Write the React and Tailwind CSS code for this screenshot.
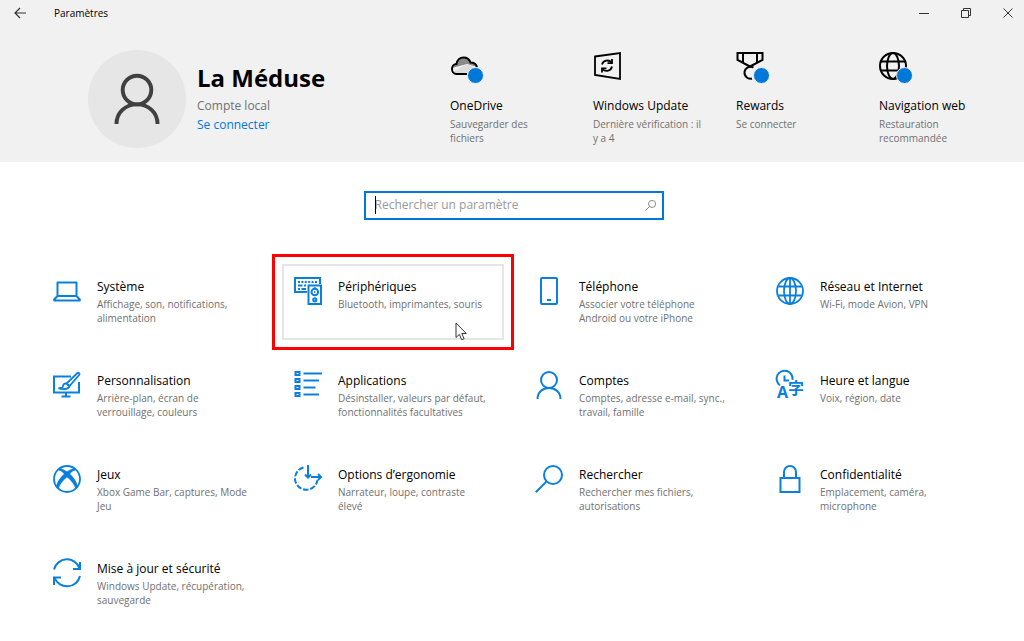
import React from 'react';

const Svg = ({ children, className = '', size = 28, stroke = 2 }) => (
  <svg
    width={size}
    height={size}
    viewBox="0 0 28 28"
    fill="none"
    stroke="currentColor"
    strokeWidth={stroke}
    className={`shrink-0 overflow-visible ${className}`}
    aria-hidden="true"
  >
    {children}
  </svg>
);

const LaptopIcon = () => (
  <Svg>
    <path d="M4.5 5.5h19V19h-19zM4.5 19 1.2 22.5v1h25.600v-1L23.5 19" strokeLinejoin="round" />
  </Svg>
);

const DevicesIcon = () => (
  <Svg>
    <path d="M13 15H1V1h25v6" />
    <path d="M4 5h20" strokeDasharray="2 1.4" />
    <path d="M4 8.5h4.500M10 8.5h2M4 12h2M7.5 12H12" />
    <path d="M14.500 8.500H27V27H14.500z" />
    <circle cx="20.800" cy="15" r="3.300" />
    <path d="M19.800 11h2M20 15h1.600" strokeWidth="1.400" />
    <circle cx="20.800" cy="22.800" r="1.600" />
  </Svg>
);

const PhoneIcon = () => (
  <Svg>
    <rect x="6" y="1" width="16" height="26" rx="1" />
    <path d="M12 23h4" />
  </Svg>
);

const GlobeIcon = () => (
  <Svg stroke={1.8}>
    <circle cx="14" cy="14" r="13" />
    <ellipse cx="14" cy="14" rx="6" ry="13" />
    <path d="M14 1v26M2.5 9.5h23M2.5 18.5h23" />
  </Svg>
);

const WebIcon = () => (
  <Svg>
    <circle cx="14" cy="14" r="13" />
    <ellipse cx="14" cy="14" rx="6" ry="13" />
    <path d="M2 9.5h24M2 18.5h24" />
  </Svg>
);

const PersonalizeIcon = () => (
  <Svg>
    <path d="M18 5.5H1v16h25V11M13 21v4.5M8.5 25.5h9" />
    <path d="M24.5 2c1-.8 2.6.6 1.8 1.8L16.5 15l-3-2.5z" strokeWidth="1.8" />
    <path d="M13.5 12.5c-2-.2-3.3 1-3.5 2.7-.1 1.2-1 1.8-4.5 1.9 3.5 1.7 10.5 1.4 11-2.1z" strokeWidth="1.8" />
  </Svg>
);

const AppsIcon = () => (
  <Svg>
    <path d="M1.5 1h4v3h-4zM1.5 8h4v3h-4zM1.5 15h4v3h-4zM1.5 22h4v3h-4z" />
    <path d="M9.5 2.5H28M9.5 9.5H25M9.5 16.5h12M9.5 23.5H25" />
  </Svg>
);

const PersonIcon = ({ size, className, stroke }) => (
  <Svg size={size} className={className} stroke={stroke}>
    <circle cx="14" cy="9" r="8" />
    <path d="M2.5 28c0-6.5 5-11 11.5-11s11.5 4.500 11.5 11" />
  </Svg>
);

const TimeLanguageIcon = () => (
  <Svg>
    <path d="M4 14.200A8 8 0 1 1 16.500 8.800" />
    <path d="M8.5 4.500V9.500h4.500" />
    <text x="1" y="27" fontSize="16" fontWeight="700" fill="currentColor" stroke="none" fontFamily="Open Sans, sans-serif">A</text>
    <text x="12" y="23" fontSize="16" fontWeight="700" fill="currentColor" stroke="none" fontFamily="Noto Sans CJK JP, sans-serif">字</text>
  </Svg>
);

const XboxIcon = () => (
  <Svg>
    <circle cx="14" cy="14" r="13" strokeWidth="1.8" />
    <path
      d="M5.5 3.5C8.5 3 11.5 4.700 14 6.500c2.500-1.800 5.500-3.500 8.500-3l-.5 2c-2 .3-3.800 2-5 3.500 4.500 4 8 9.500 7.700 13.500l-2.200 1.700C21.500 19.500 18 15.500 14 12.200c-4 3.300-7.500 7.300-8.500 12l-2.200-1.700C3 18.500 6.500 13 11 9 9.800 7.500 8 5.800 6 5.500z"
      fill="currentColor"
      stroke="none"
    />
  </Svg>
);

const EaseIcon = () => (
  <Svg>
    <path d="M9.500 2.500A11.300 11.300 0 1 0 23.500 15" strokeDasharray="5.500 1.800" />
    <path d="M14 0v12M11 9.500l3 3 3-3" />
    <path d="M17 12h10M24 9l3 3-3 3" />
  </Svg>
);

const SearchIcon = ({ size, className, stroke }) => (
  <Svg size={size} className={className} stroke={stroke}>
    <circle cx="18" cy="10" r="9" />
    <path d="M11.6 16.4.8 27.2" />
  </Svg>
);

const LockIcon = () => (
  <Svg>
    <path d="M4.5 13h19v14h-19zM8 13V7a6 6 0 0 1 12 0v6" />
  </Svg>
);

const SyncIcon = () => (
  <Svg>
    <path d="M1 10.5A13.3 13.3 0 0 1 26.5 9.3M27 17A13.3 13.3 0 0 1 1.500 18.500" />
    <path d="M27 3v7h-7M1 26v-7.500h7" />
  </Svg>
);

const CloudIcon = () => (
  <Svg>
    <path d="M2 16c0-3 2.5-4.5 4-4.5C7 7 10 5 13.5 5c4 0 6.500 2 7.500 5 4 0 6 2.500 6.300 5L17 12z" fill="#8a8a8a" stroke="none" />
    <path d="m3 20 14-8 10 5-5 5H6z" fill="#dcdcdc" stroke="none" />
    <path d="M17 22H6.500C3.500 22 2 19.500 2 17c0-3 2-5 4.500-5C7 8 10 5.500 13.500 5.500c3.500 0 6 2 7 5 3.500 0 6 2 6.500 5" />
  </Svg>
);

const UpdateIcon = () => (
  <Svg stroke={1.8}>
    <path d="M2 4.5 27 1v26L2 23z" />
    <path d="M9 12.5a5.5 5.5 0 0 1 9.500-2M19 14.500a5.500 5.500 0 0 1-9.500 2.500" />
    <path d="M19 7v4.200h-4.500M9 20.500v-4.200h4.500" />
  </Svg>
);

const RewardsIcon = () => (
  <Svg>
    <path d="M1.5 1h25v7L14 14.5 1.5 8zM7 1v10M21 1v10" />
    <path d="M17.5 15.5a6 6 0 1 0-1.500 11" />
  </Svg>
);

const quickLinks = [
  { title: 'OneDrive', text: 'Sauvegarder des fichiers', Icon: CloudIcon, badge: true },
  { title: 'Windows Update', text: 'Dernière vérification\u00a0:\u00a0il y a 4', Icon: UpdateIcon },
  { title: 'Rewards', text: 'Se connecter', Icon: RewardsIcon, badge: true },
  { title: 'Navigation web', text: 'Restauration recommandée', Icon: WebIcon, badge: true },
];

const categories = [
  { title: 'Système', text: 'Affichage, son, notifications, alimentation', Icon: LaptopIcon },
  { title: 'Périphériques', text: 'Bluetooth, imprimantes, souris', Icon: DevicesIcon, active: true },
  { title: 'Téléphone', text: 'Associer votre téléphone Android ou votre iPhone', Icon: PhoneIcon },
  { title: 'Réseau et Internet', text: 'Wi-Fi, mode Avion, VPN', Icon: GlobeIcon },
  { title: 'Personnalisation', text: 'Arrière-plan, écran de verrouillage, couleurs', Icon: PersonalizeIcon },
  { title: 'Applications', text: 'Désinstaller, valeurs par défaut, fonctionnalités facultatives', Icon: AppsIcon },
  { title: 'Comptes', text: 'Comptes, adresse e-mail, sync., travail, famille', Icon: PersonIcon },
  { title: 'Heure et langue', text: 'Voix, région, date', Icon: TimeLanguageIcon },
  { title: 'Jeux', text: 'Xbox Game Bar, captures, Mode Jeu', Icon: XboxIcon },
  { title: 'Options d’ergonomie', text: 'Narrateur, loupe, contraste élevé', Icon: EaseIcon },
  { title: 'Rechercher', text: 'Rechercher mes fichiers, autorisations', Icon: SearchIcon },
  { title: 'Confidentialité', text: 'Emplacement, caméra, microphone', Icon: LockIcon },
  { title: 'Mise à jour et sécurité', text: 'Windows Update, récupération, sauvegarde', Icon: SyncIcon },
];

const TitleBar = () => (
  <div className="flex h-[26px] items-center">
    <button type="button" aria-label="Retour" className="flex h-full w-10 items-center justify-center">
      <svg width="12" height="12" viewBox="0 0 12 12" fill="none" stroke="#333" strokeWidth="1.2">
        <path d="M6 1 1 6l5 5M1 6h11" />
      </svg>
    </button>
    <h1 className="ml-[14px] text-[10px] text-black">Paramètres</h1>
    <div className="ml-auto flex h-full gap-[10px] text-[#333]">
      <button type="button" aria-label="Réduire" className="flex w-8 items-center justify-center">
        <svg width="10" height="10" viewBox="0 0 10 10" stroke="currentColor"><path d="M0 5.5h10" /></svg>
      </button>
      <button type="button" aria-label="Restaurer" className="flex w-8 items-center justify-center">
        <svg width="10" height="10" viewBox="0 0 10 10" fill="none" stroke="currentColor">
          <path d="M.5 2.5h7v7h-7zM2.5 2.5v-2h7v7h-2" />
        </svg>
      </button>
      <button type="button" aria-label="Fermer" className="flex w-8 items-center justify-center">
        <svg width="10" height="10" viewBox="0 0 10 10" stroke="currentColor"><path d="m.5.5 9 9M9.5.5l-9 9" /></svg>
      </button>
    </div>
  </div>
);

const QuickLink = ({ item }) => {
  const { Icon } = item;
  return (
    <a href="#" className="block w-[143px] pr-8">
      <span className="relative block h-7 w-7 text-black">
        <Icon />
        {item.badge && (
          <span className="absolute -right-[6px] -bottom-1 h-[17px] w-[17px] rounded-full border border-[#f1f1f1] bg-[#0078d7]" />
        )}
      </span>
      <span className="mt-[18px] block text-[12px] leading-4 whitespace-nowrap text-black">{item.title}</span>
      <span className="mt-[3px] block text-[10px] leading-[14px] text-[#707070]">{item.text}</span>
    </a>
  );
};

const CategoryTile = ({ item }) => {
  const { Icon } = item;
  return (
    <a
      href="#"
      className={`relative flex h-[76px] gap-4 border-2 px-[10px] pt-[11px] ${
        item.active ? 'border-[#e6e6e6]' : 'border-transparent'
      }`}
    >
      <span className="text-[#0a80dc]">
        <Icon />
      </span>
      <span className="min-w-0">
        <span className="block text-[12px] leading-5 whitespace-nowrap text-black">{item.title}</span>
        <span className="block text-[10px] leading-[14px] text-[#707070]">{item.text}</span>
      </span>
      {item.active && (
        <>
          <span className="pointer-events-none absolute -inset-3 border-[3px] border-[#ff0000]" />
          <svg className="absolute right-[35px] -bottom-[3px]" width="12" height="19" viewBox="0 0 12 19">
            <path d="M1 1v14.5l3.4-3.2 2.3 5.4 2.4-1-2.3-5.2h4.5z" fill="#fff" stroke="#333" />
          </svg>
        </>
      )}
    </a>
  );
};

const App = () => (
  <div className="min-h-screen bg-white font-['Open_Sans','Noto_Sans',sans-serif]">
    <header className="bg-[#f1f1f1] pb-[14px]">
      <TitleBar />
      <div className="flex justify-between pt-6 pl-[88px]">
        <div className="flex gap-[11px]">
          <div className="flex h-[98px] w-[98px] shrink-0 items-center justify-center rounded-full bg-[#e6e6e6]">
            <PersonIcon size={50} stroke={2.2} className="text-[#404040]" />
          </div>
          <div className="pt-3">
            <h2 className="text-[24px] leading-8 font-bold whitespace-nowrap text-black">La Méduse</h2>
            <p className="mt-[2px] text-[12px] leading-[19px] text-[#707070]">Compte local</p>
            <a href="#" className="block text-[12px] leading-[19px] text-[#0078d7]">Se connecter</a>
          </div>
        </div>
        <nav className="flex pt-[2px] pr-[2px]" aria-label="Raccourcis">
          {quickLinks.map((item) => (
            <QuickLink key={item.title} item={item} />
          ))}
        </nav>
      </div>
    </header>

    <main className="pt-[29px] pr-[38px] pb-6 pl-[41px]">
      <div className="relative mx-auto w-[300px]">
        <input
          type="text"
          aria-label="Rechercher un paramètre"
          placeholder="Rechercher un paramètre"
          className="block h-[29px] w-full border-2 border-[#0078d7] bg-white pr-8 pb-[2px] pl-[9px] text-[12px] caret-transparent outline-none placeholder:text-[#999]"
        />
        <span className="absolute top-[5px] left-[11px] h-[18px] w-px bg-black" />
        <SearchIcon size={11} stroke={2.5} className="absolute top-[9px] right-2 text-[#888]" />
      </div>

      <nav className="mt-11 grid grid-cols-4 gap-x-[19px] gap-y-[18px]" aria-label="Catégories">
        {categories.map((item) => (
          <CategoryTile key={item.title} item={item} />
        ))}
      </nav>
    </main>
  </div>
);

export default App;
